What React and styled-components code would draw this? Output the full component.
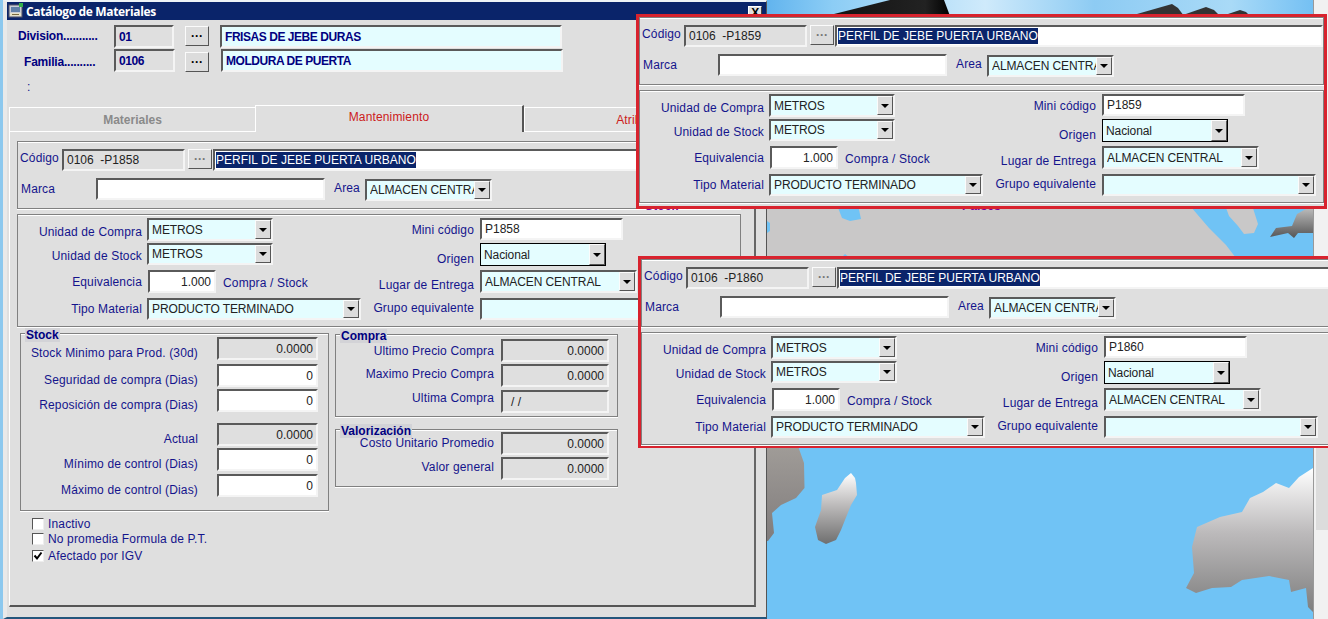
import React from 'react'
import styled, { createGlobalStyle } from 'styled-components'

const Global = createGlobalStyle`
html,body{margin:0;padding:0;background:#8cc8ee;overflow:hidden;}
*{box-sizing:border-box;}
`
const CYAN = '#e4fdff'
const NAVY = '#14148c'
const GREY = '#dfdfdf'

const Desktop = styled.div`
position:relative;
display:flex;
width:1328px;
height:619px;
overflow:hidden;
padding-left:3px;
font-family:"Liberation Sans",Arial,sans-serif;
font-size:12px;
letter-spacing:.15px;
`
const Window = styled.div`
flex:none;
display:flex;
flex-direction:column;
width:764px;
height:619px;
background:${GREY};
border-top:2px solid #eef3f7;
border-left:4px solid #e9e9e9;
border-right:1px solid #555;
border-bottom:2px solid #24567c;
`
const TitleBar = styled.div`
flex:none;
display:flex;
align-items:center;
height:18px;
padding:0 4px 0 1px;
background:#0a246a;
color:#fff;
font-family:"Open Sans",sans-serif;
font-weight:700;
font-size:12px;
letter-spacing:-.35px;
gap:2px;
`
const TitleText = styled.span`
flex:1;
`
const CloseBtn = styled.div`
display:flex;
align-items:center;
justify-content:center;
width:14px;
height:14px;
margin-top:3px;
background:#dfdfdf;
border:1px solid;
border-color:#fff #444 #444 #fff;
color:#000;
font-family:"Liberation Sans",sans-serif;
font-size:12px;
font-weight:700;
`
const Header = styled.div`
flex:none;
padding-top:5px;
`
const HeadRow = styled.div`
display:flex;
height:${p=>p.$h}px;
padding-left:${p=>p.$indent}px;
`
const HeadLabel = styled.div`
width:${p=>p.$w}px;
padding-top:${p=>p.$top}px;
color:#000080;
font-weight:700;
letter-spacing:-.2px;
white-space:nowrap;
`
const Sunken = styled.div`
flex:none;
display:flex;
align-items:center;
grid-column:${p=>p.$col || 'auto'};
width:${p=>p.$w ? p.$w+'px' : 'auto'};
height:${p=>p.$h || 22}px;
margin-left:${p=>p.$ml || 0}px;
justify-content:${p=>p.$right ? 'flex-end' : 'flex-start'};
padding:0 3px 0 ${p=>p.$left || 3}px;
background:${p=>p.$bg || '#fff'};
border:2px solid;
border-color:#5a5a5a #f4f4f4 #f4f4f4 #5a5a5a;
color:${p=>p.$color || '#222'};
font-weight:${p=>p.$bold ? 700 : 400};
letter-spacing:${p=>p.$bold ? '-.45px' : '0'};
white-space:pre;
overflow:hidden;
`
const WideField = styled(Sunken)`
flex:1;
min-width:0;
`
const Dots = styled.div`
flex:none;
display:flex;
align-items:center;
justify-content:center;
width:${p=>p.$w || 24}px;
height:${p=>p.$h || 20}px;
margin-left:${p=>p.$ml || 0}px;
margin-top:${p=>p.$mt || 0}px;
background:#dcdcdc;
border:1px solid;
border-color:#fbfbfb #555 #555 #fbfbfb;
color:${p=>p.$color || '#000'};
font-weight:700;
font-size:12px;
letter-spacing:0;
`
const ColonLine = styled.div`
height:32px;
padding:7px 0 0 20px;
color:${NAVY};
`
const Tabs = styled.div`
flex:none;
display:flex;
height:27px;
margin-left:2px;
width:747px;
`
const Tab = styled.div`
display:flex;
align-items:center;
justify-content:center;
width:${p=>p.$w}px;
margin-top:${p=>p.$active ? 0 : 2}px;
padding-bottom:${p=>p.$active ? 4 : 0}px;
background:${GREY};
border-top:1px solid #fff;
border-left:1px solid #fff;
border-right:${p=>p.$edge ? '2px solid #555' : 'none'};
border-bottom:${p=>p.$active ? 'none' : '1px solid #fff'};
color:${p=>p.$active || p.$red ? '#cc2020' : '#8a8a8a'};
font-weight:${p=>p.$active || p.$red ? 400 : 700};
letter-spacing:${p=>p.$active || p.$red ? '.15px' : '0'};
`
const Panel = styled.div`
flex:none;
width:747px;
height:475px;
margin-left:2px;
padding:9px 13px 0 7px;
border-left:1px solid #fff;
border-right:2px solid #666;
border-bottom:2px solid #555;
`
const Group = styled.div`
border:1px solid #808080;
box-shadow:inset 0 1px 0 #fff,0 1px 0 #fff;
`
const FormWrap = styled.div`
display:flex;
flex-direction:column;
gap:5px;
`
const TopGroup = styled(Group)`
display:flex;
flex-direction:column;
gap:7px;
height:68px;
padding-top:7px;
`
const Row = styled.div`
display:flex;
height:22px;
align-items:flex-start;
`
const Label = styled.div`
flex:none;
width:${p=>p.$w ? p.$w+'px' : 'auto'};
padding-left:${p=>p.$pl || 0}px;
padding-top:${p=>p.$top || 0}px;
margin-left:${p=>p.$ml || 0}px;
color:${NAVY};
white-space:nowrap;
`
const FieldGrid = styled(Group)`
display:grid;
grid-template-columns:124px 5px 220px 107px 6px 1fr;
grid-template-rows:25px 27px 28px 22px;
height:113px;
padding-top:3px;
`
const GridLabel = styled.div`
grid-column:${p=>p.$col};
padding-top:${p=>p.$top}px;
text-align:right;
color:${NAVY};
white-space:nowrap;
`
const EquivCell = styled.div`
grid-column:3;
display:flex;
align-items:flex-start;
gap:7px;
padding-left:1px;
`
const ComboBox = styled.div`
grid-column:${p=>p.$col || 'auto'};
display:flex;
align-items:center;
width:${p=>p.$w}px;
height:${p=>p.$h || 22}px;
margin-top:${p=>p.$mt || 0}px;
padding-left:3px;
background:${CYAN};
border:${p=>p.$focus ? '1px solid #000' : '2px solid'};
border-color:${p=>p.$focus ? '#000' : '#5a5a5a #f4f4f4 #f4f4f4 #5a5a5a'};
color:#222;
letter-spacing:-.1px;
white-space:nowrap;
overflow:hidden;
`
const ComboText = styled.span`
flex:1;
min-width:0;
overflow:hidden;
`
const ComboArrow = styled.span`
flex:none;
display:flex;
align-items:center;
justify-content:center;
width:16px;
height:100%;
background:#dcdcdc;
border:1px solid;
border-color:#fbfbfb #555 #555 #fbfbfb;
&::after{
  content:"";
  border-left:4px solid transparent;
  border-right:4px solid transparent;
  border-top:4px solid #000;
}
`
const Lower = styled.div`
display:flex;
gap:6px;
align-items:flex-start;
margin:6px 0 0 3px;
`
const RightCol = styled.div`
display:flex;
flex-direction:column;
gap:12px;
width:283px;
margin-top:1px;
`
const Box = styled(Group)`
position:relative;
width:${p=>p.$w ? p.$w+'px' : 'auto'};
padding:${p=>p.$pad};
`
const Legend = styled.div`
position:absolute;
left:4px;
top:-6px;
padding:0 1px;
height:14px;
line-height:14px;
background:#d3d3d7;
color:#000080;
font-weight:700;
letter-spacing:0;
`
const StatRow = styled.div`
display:grid;
grid-template-columns:${p=>p.$cols};
column-gap:${p=>p.$gap}px;
margin-top:${p=>p.$mt || 0}px;
`
const StatLabel = styled.div`
padding-top:${p=>p.$top}px;
text-align:right;
color:${NAVY};
white-space:nowrap;
`
const Checks = styled.div`
display:flex;
flex-direction:column;
margin:5px 0 0 15px;
`
const CheckRow = styled.div`
display:flex;
align-items:center;
gap:4px;
height:${p=>p.$h}px;
color:${NAVY};
`
const CheckBox = styled.span`
flex:none;
display:flex;
width:12px;
height:12px;
background:#fff;
border:1px solid;
border-color:#555 #eee #eee #555;
`
const MapPane = styled.div`
flex:none;
width:546px;
height:619px;
`
const MapSvg = styled.svg`
display:block;
`
const Scroll = styled.div`
flex:none;
width:15px;
height:619px;
padding-left:2px;
background:#f1f1f1;
border-left:1px solid #999;
`
const Thumb = styled.div`
height:90px;
margin-top:440px;
background:#dcdcdc;
`
const Overlay = styled.div`
position:absolute;
left:${p=>p.$x}px;
top:${p=>p.$y}px;
width:${p=>p.$w}px;
padding-bottom:${p=>p.$pb}px;
background:${GREY};
border:3px solid #d8232e;
`
const Peek = styled.div`
position:absolute;
top:199px;
left:${p=>p.$x}px;
color:#7a00a0;
font-weight:700;
font-size:12px;
`
const Selected = styled.span`
background:#0a246a;
color:#fff;
padding:1px 0;
`

const Combo = ({col,w,h,mt,focus,text}) => (
  <ComboBox $col={col} $w={w} $h={h} $mt={mt} $focus={focus}>
    <ComboText>{text}</ComboText>
    <ComboArrow />
  </ComboBox>
)

const ProductForm = ({mini}) => (
  <FormWrap>
    <TopGroup>
      <Row>
        <Label $w={44} $pl={2} $top={2}>Código</Label>
        <Sunken $w={123} $bg={GREY}>{`0106  -${mini}`}</Sunken>
        <Dots $ml={3} $color="#777">···</Dots>
        <WideField $ml={1} $left={1}><Selected>PERFIL DE JEBE PUERTA URBANO</Selected></WideField>
      </Row>
      <Row>
        <Label $w={78} $pl={3} $top={4}>Marca</Label>
        <Sunken $w={229} />
        <Label $w={31} $ml={9} $top={3}>Area</Label>
        <Combo w={127} mt={1} text="ALMACEN CENTRAL" />
      </Row>
    </TopGroup>
    <FieldGrid>
      <GridLabel $col={1} $top={7}>Unidad de Compra</GridLabel>
      <Combo col={3} w={126} h={23} text="METROS" />
      <GridLabel $col={4} $top={5}>Mini código</GridLabel>
      <Sunken $col={6} $w={143} $h={22}>{mini}</Sunken>

      <GridLabel $col={1} $top={6}>Unidad de Stock</GridLabel>
      <Combo col={3} w={126} h={22} text="METROS" />
      <GridLabel $col={4} $top={9}>Origen</GridLabel>
      <Combo col={6} w={126} h={23} focus text="Nacional" />

      <GridLabel $col={1} $top={5}>Equivalencia</GridLabel>
      <EquivCell>
        <Sunken $w={68} $h={23} $right>1.000</Sunken>
        <Label $top={6}>Compra / Stock</Label>
      </EquivCell>
      <GridLabel $col={4} $top={8}>Lugar de Entrega</GridLabel>
      <Combo col={6} w={157} h={23} text="ALMACEN CENTRAL" />

      <GridLabel $col={1} $top={4}>Tipo Material</GridLabel>
      <Combo col={3} w={214} text="PRODUCTO TERMINADO" />
      <GridLabel $col={4} $top={3}>Grupo equivalente</GridLabel>
      <Combo col={6} w={214} text="" />
    </FieldGrid>
  </FormWrap>
)

const stockRows = [
  {label:'Stock Minimo para Prod. (30d)',val:'0.0000',bg:GREY,top:9,mt:0},
  {label:'Seguridad de compra (Dias)',val:'0',top:9,mt:4},
  {label:'Reposición de compra (Dias)',val:'0',top:9,mt:2},
  {label:'Actual',val:'0.0000',bg:GREY,top:9,mt:11},
  {label:'Mínimo de control (Dias)',val:'0',top:9,mt:2},
  {label:'Máximo de control (Dias)',val:'0',top:9,mt:3},
]

const compraRows = [
  {label:'Ultimo Precio Compra',val:'0.0000',bg:GREY,top:5,mt:0},
  {label:'Maximo Precio Compra',val:'0.0000',bg:GREY,top:3,mt:2},
  {label:'Ultima Compra',text:'/ /',top:1,mt:3},
]

const valorRows = [
  {label:'Costo Unitario Promedio',val:'0.0000',bg:GREY,top:4,mt:0},
  {label:'Valor general',val:'0.0000',bg:GREY,top:3,mt:2},
]

const StatRows = ({rows,cols,gap}) => rows.map(r => (
  <StatRow key={r.label} $cols={cols} $gap={gap} $mt={r.mt}>
    <StatLabel $top={r.top}>{r.label}</StatLabel>
    {r.text
      ? <Sunken $h={23} $bg={GREY} $left={8}>{r.text}</Sunken>
      : <Sunken $h={23} $bg={r.bg || '#fff'} $right>{r.val}</Sunken>}
  </StatRow>
))

const WinIcon = () => (
  <svg width="16" height="16" viewBox="0 0 16 16">
    <rect x="1" y="2" width="13" height="12" fill="#c9cdd6" stroke="#556" strokeWidth="1" />
    <rect x="3" y="4" width="9" height="5" fill="#5f7fa8" />
    <rect x="2" y="10" width="11" height="3" fill="#e6e2c8" />
    <rect x="4" y="11" width="7" height="1" fill="#7a6a40" />
    <path d="M11 0h4v4h-4z" fill="#35b04a" />
  </svg>
)

const MapArt = () => (
  <MapSvg width="546" height="619" viewBox="767 0 546 619">
    <defs>
      <linearGradient id="sky" x1="0" x2="1" y1="0" y2="0">
        <stop offset="0" stopColor="#62b4ee" />
        <stop offset=".12" stopColor="#8ccdf5" />
        <stop offset=".4" stopColor="#cfeafb" />
        <stop offset=".6" stopColor="#8dcbf3" />
        <stop offset=".85" stopColor="#a9daf7" />
        <stop offset="1" stopColor="#74c0f3" />
      </linearGradient>
      <linearGradient id="africa" x1="0" x2="0" y1="0" y2="1">
        <stop offset="0" stopColor="#a09c98" />
        <stop offset="1" stopColor="#807c7c" />
      </linearGradient>
      <linearGradient id="mada" x1="0" x2="0" y1="0" y2="1">
        <stop offset="0" stopColor="#ffffff" />
        <stop offset=".45" stopColor="#bdbbbb" />
        <stop offset="1" stopColor="#6f6f6f" />
      </linearGradient>
      <linearGradient id="aus" x1="0" x2="0" y1="0" y2="1">
        <stop offset="0" stopColor="#ffffff" />
        <stop offset=".45" stopColor="#bcbabb" />
        <stop offset="1" stopColor="#7e7e7e" />
      </linearGradient>
      <linearGradient id="dark" x1="0" x2="0" y1="0" y2="1">
        <stop offset="0" stopColor="#c6c6c6" />
        <stop offset="1" stopColor="#555" />
      </linearGradient>
      <linearGradient id="shade" x1="0" x2="1" y1="0" y2="0">
        <stop offset="0" stopColor="#111" />
        <stop offset=".8" stopColor="#222" />
        <stop offset="1" stopColor="#000" />
      </linearGradient>
    </defs>
    <rect x="767" y="0" width="546" height="619" fill="#70c3f5" />
    <rect x="767" y="0" width="546" height="16" fill="url(#sky)" />
    <path d="M826 16L890 0H944L950 16Z" fill="url(#shade)" />
    <path d="M1130 16L1172 4 1178 8 1184 16Z" fill="#333" />
    <path d="M1180 16L1206 7 1214 10 1220 16Z" fill="#333" />
    <path d="M1222 16L1240 10 1246 12 1250 16Z" fill="#333" />
    <path d="M767 200H1185L1209 228 1226 245 1236 258H767Z" fill="#c9c8c8" />
    <path d="M837 205H858L861 219 850 221 842 218Z" fill="#70c3f5" />
    <path d="M767 221L770 223V231L767 233Z" fill="#70c3f5" />
    <path d="M841 258L845 254 850 258Z" fill="#70c3f5" />
    <path d="M1225 205H1252L1258 224 1254 233 1244 234 1238 226 1229 216Z" fill="#c9c8c8" />
    <path d="M1313 205V233L1298 233 1294 238 1288 233 1270 237 1276 228 1292 226 1297 214Z" fill="url(#dark)" />
    <path d="M769 446H798L804 463 804.5 488 796 498 781 505 772 513 774 533 768 541 767 541V446Z" fill="url(#africa)" />
    <path d="M851 473L855 478 856 483 857 495 851 505 841 530 836 540 826 544 818 540 815 527 821 510 822 495 837 490 845 478Z" fill="url(#mada)" />
    <path d="M1313 468L1299 477 1289 488 1276 483 1263 492 1250 498 1242 512 1220 517 1197 527 1192 547 1194 573 1186 588 1196 593 1212 588 1231 587 1242 580 1269 576 1289 580 1291 592 1306 588 1308 607 1313 612Z" fill="url(#aus)" />
  </MapSvg>
)

const CheckMark = () => (
  <svg width="10" height="10" viewBox="0 0 10 10">
    <path d="M1.5 4.5L4 7.5 8.5 1.5" fill="none" stroke="#000" strokeWidth="2" />
  </svg>
)

export default function App() {
  return (
    <>
      <Global />
      <Desktop>
        <Window>
          <TitleBar>
            <WinIcon />
            <TitleText>Catálogo de Materiales</TitleText>
            <CloseBtn>X</CloseBtn>
          </TitleBar>
          <Header>
            <HeadRow $h={24} $indent={11}>
              <HeadLabel $w={96} $top={4}>Division...........</HeadLabel>
              <Sunken $w={60} $h={23} $bg={GREY} $bold $color="#000080">01</Sunken>
              <Dots $ml={11} $mt={1}>···</Dots>
              <Sunken $w={342} $h={23} $ml={11} $bg={CYAN} $bold $color="#000080">FRISAS DE JEBE DURAS</Sunken>
            </HeadRow>
            <HeadRow $h={24} $indent={17}>
              <HeadLabel $w={90} $top={6}>Familia..........</HeadLabel>
              <Sunken $w={61} $h={23} $bg={GREY} $bold $color="#000080">0106</Sunken>
              <Dots $ml={10} $mt={3}>···</Dots>
              <Sunken $w={342} $h={23} $ml={12} $bg={CYAN} $bold $color="#000080">MOLDURA DE PUERTA</Sunken>
            </HeadRow>
            <ColonLine>:</ColonLine>
          </Header>
          <Tabs>
            <Tab $w={246}>Materiales</Tab>
            <Tab $w={269} $active $edge>Mantenimiento</Tab>
            <Tab $w={232} $red>Atributos</Tab>
          </Tabs>
          <Panel>
            <ProductForm mini="P1858" />
            <Lower>
              <Box $w={309} $pad="3px 0 13px">
                <Legend>Stock</Legend>
                <StatRows rows={stockRows} cols="177px 101px" gap={19} />
              </Box>
              <RightCol>
                <Box $pad="4px 0 3px">
                  <Legend>Compra</Legend>
                  <StatRows rows={compraRows} cols="158px 108px" gap={7} />
                </Box>
                <Box $pad="2px 0 6px">
                  <Legend>Valorización</Legend>
                  <StatRows rows={valorRows} cols="158px 108px" gap={7} />
                </Box>
              </RightCol>
            </Lower>
            <Checks>
              <CheckRow $h={15}><CheckBox />Inactivo</CheckRow>
              <CheckRow $h={15}><CheckBox />No promedia Formula de P.T.</CheckRow>
              <CheckRow $h={19}><CheckBox><CheckMark /></CheckBox>Afectado por IGV</CheckRow>
            </Checks>
          </Panel>
        </Window>
        <MapPane><MapArt /></MapPane>
        <Scroll><Thumb /></Scroll>
        <Peek $x={645}>Stock</Peek>
        <Peek $x={962}>Países</Peek>
        <Overlay $x={636} $y={14} $w={691} $pb={3}><ProductForm mini="P1859" /></Overlay>
        <Overlay $x={638} $y={256} $w={700} $pb={0}><ProductForm mini="P1860" /></Overlay>
      </Desktop>
    </>
  )
}
